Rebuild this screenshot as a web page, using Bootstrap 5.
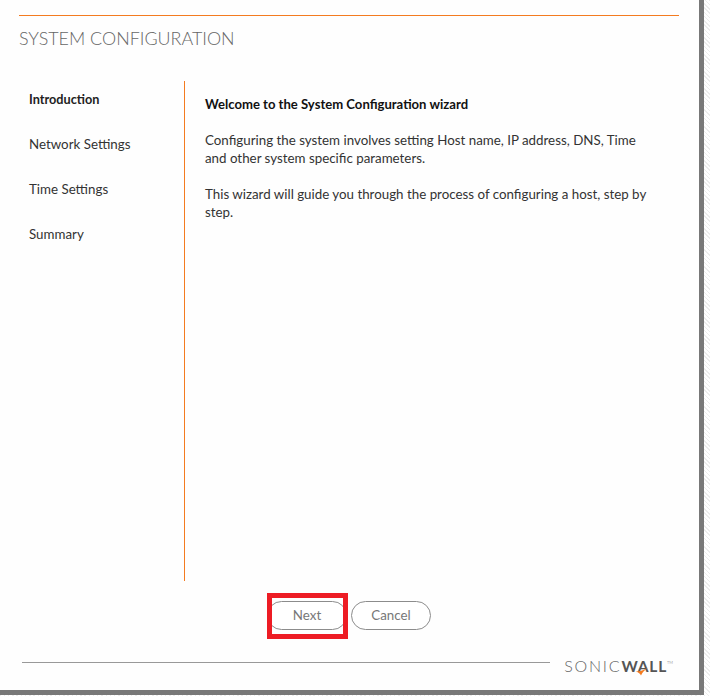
<!DOCTYPE html>
<html lang="en">
<head>
  <meta charset="UTF-8">
  <meta name="viewport" content="width=device-width, initial-scale=1.0">
  <title>System Configuration</title>
  <link href="https://cdn.jsdelivr.net/npm/bootstrap@5.3.0/dist/css/bootstrap.min.css" rel="stylesheet">
  <style>
    html, body {
      height: 696px;
      overflow: hidden;
    }
    body {
      font-family: "Lato", "Liberation Sans", sans-serif;
      font-size: 13.33px;
      color: #333;
      background: repeating-linear-gradient(45deg, #ececec 0 1px, #fff 1px 3px);
    }
    .dialog-box {
      width: 704px;
      height: 695px;
      background: #fefefe;
      border-right: 5px solid #787878;
      border-bottom: 5px solid #787878;
      padding: 15px 20px 0 19px;
    }
    .top-rule {
      border-top: 1px solid #f47b20;
    }
    .wiz-title {
      font-size: 17.9px;
      font-weight: 300;
      color: #666;
      line-height: 24px;
      margin: 10px 0 31px;
    }
    .wiz-body {
      height: 500px;
    }
    .wiz-steps {
      width: 166px;
      padding: 9px 0 0 10px;
      border-right: 1px solid #f47b20;
    }
    .wiz-steps div {
      height: 45px;
      line-height: 18px;
      color: #333;
    }
    .wiz-steps .on {
      font-size: 12.7px;
      font-weight: 700;
      color: #222;
    }
    .wiz-text {
      padding: 14px 20px 0 20px;
      line-height: 18px;
    }
    .wiz-text h6 {
      font-size: 13.1px;
      font-weight: 700;
      line-height: 18px;
      color: #111;
      margin-bottom: 18px;
    }
    .wiz-text p {
      margin-bottom: 18px;
    }
    .wiz-btns {
      margin-top: 19px;
      height: 30px;
      padding-left: 248px;
      gap: 4px;
    }
    .btn-pill {
      width: 80px;
      height: 29px;
      padding: 1px 0 0;
      font-size: 13.33px;
      color: #777;
      background: #fff;
      border: 1px solid #8c8c8c;
      border-radius: 15px;
    }
    .btn-mark {
      position: absolute;
      top: -8px;
      bottom: -9px;
      left: 0;
      width: 81px;
      border: 5px solid #ed1c24;
    }
    .wiz-foot {
      margin-top: 28px;
      padding-left: 3px;
    }
    .foot-line {
      border-top: 1px solid #999;
      margin-top: 4px;
      height: 0;
    }
    .brand {
      font-size: 16px;
      font-weight: 300;
      letter-spacing: 1.8px;
      color: #666;
      margin: 0 6px 0 14px;
      line-height: 16px;
      white-space: nowrap;
      position: relative;
    }
    .brand b {
      color: #555;
      font-weight: 700;
      font-size: 15.5px;
      letter-spacing: 0.8px;
    }
    .brand sup {
      font-size: 4px;
      top: -8px;
      letter-spacing: 0;
    }
    .brand-swoosh {
      position: absolute;
      left: 71px;
      top: 9px;
    }
  </style>
</head>
<body>
  <div class="dialog-box">
    <div class="top-rule"></div>
    <div class="wiz-title">SYSTEM CONFIGURATION</div>

    <div class="wiz-body d-flex">
      <div class="wiz-steps flex-shrink-0">
        <div class="on">Introduction</div>
        <div>Network Settings</div>
        <div>Time Settings</div>
        <div>Summary</div>
      </div>
      <div class="wiz-text flex-grow-1">
        <h6>Welcome to the System Configuration wizard</h6>
        <p>Configuring the system involves setting Host name, IP address, DNS, Time and other system specific parameters.</p>
        <p>This wizard will guide you through the process of configuring a host, step by step.</p>
      </div>
    </div>

    <div class="wiz-btns d-flex align-items-center">
      <div class="position-relative flex-shrink-0">
        <button type="button" class="btn btn-pill d-block">Next</button>
        <div class="btn-mark"></div>
      </div>
      <button type="button" class="btn btn-pill flex-shrink-0">Cancel</button>
    </div>

    <div class="wiz-foot d-flex align-items-start">
      <div class="foot-line flex-grow-1"></div>
      <div class="brand">SONIC<b>WALL</b><sup>TM</sup>
        <svg class="brand-swoosh" width="14" height="9" viewBox="0 0 14 9"><path d="M0.5 4.5 C5 4.5 9 3 13.5 0.5 C10 3 7.5 4.5 6 8.5 C5 6.5 3 5 0.5 4.5 Z" fill="#f47b20"/></svg>
      </div>
    </div>
  </div>
  <script src="https://cdn.jsdelivr.net/npm/bootstrap@5.3.0/dist/js/bootstrap.bundle.min.js"></script>
</body>
</html>
